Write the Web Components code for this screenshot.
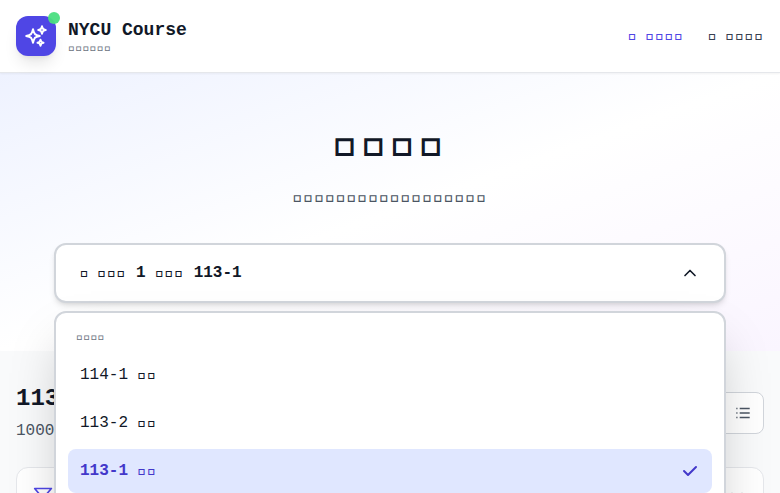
<!DOCTYPE html>
<html lang="zh-Hant"><head><meta charset="utf-8"><title>NYCU Course</title>
<style>
html,body{margin:0;height:100%;overflow:hidden}
body{font-family:"Liberation Mono",monospace;font-size:16px;line-height:24px;color:#111827;background:#f9fafb}
</style></head><body>
<course-app></course-app>
<script>
const define=(name,html)=>customElements.define(name,class extends HTMLElement{
  constructor(){super();this.attachShadow({mode:'open'}).innerHTML=html.replaceAll('□','\uE123')}
});
define('lead-glyph',`<style>:host{letter-spacing:-1.6px}</style>□`);
define('brand-mark',`<style>
:host{display:flex;align-items:center;gap:12px}
.logo{position:relative;width:40px;height:40px;border-radius:12px;background:#4f46e5;display:grid;place-items:center;box-shadow:0 10px 15px -3px #0000001a,0 4px 6px -4px #0000001a}
.logo:after{content:"";position:absolute;right:-4px;top:-4px;width:12px;height:12px;border-radius:50%;background:#4ade80;opacity:.95}
b{display:block;font-size:18px;line-height:28px}small{display:block;font-size:12px;line-height:16px;color:#6b7280;margin-top:-4px}
</style><div class="logo"><svg width="24" height="24" viewBox="0 0 24 24" fill="none" stroke="#fff" stroke-width="2" stroke-linecap="round" stroke-linejoin="round"><path d="M9.813 15.904 9 18.75l-.813-2.846a4.5 4.5 0 0 0-3.09-3.09L2.25 12l2.846-.813a4.5 4.5 0 0 0 3.09-3.09L9 5.25l.813 2.846a4.5 4.5 0 0 0 3.09 3.09L15.75 12l-2.846.813a4.5 4.5 0 0 0-3.09 3.09ZM18.259 8.715 18 9.75l-.259-1.035a3.375 3.375 0 0 0-2.455-2.456L14.25 6l1.036-.259a3.375 3.375 0 0 0 2.455-2.456L18 2.25l.259 1.035a3.375 3.375 0 0 0 2.456 2.456L21.75 6l-1.035.259a3.375 3.375 0 0 0-2.456 2.456ZM16.894 20.567 16.5 21.75l-.394-1.183a2.25 2.25 0 0 0-1.423-1.423L13.5 18.75l1.183-.394a2.25 2.25 0 0 0 1.423-1.423l.394-1.183.394 1.183a2.25 2.25 0 0 0 1.423 1.423l1.183.394-1.183.394a2.25 2.25 0 0 0-1.423 1.423Z"/></svg></div><div><b>NYCU Course</b><small>□□□□□□</small></div>`);
define('site-header',`<style>
:host{display:flex;justify-content:space-between;align-items:center;height:72px;padding:0 16px;background:#fff;border-bottom:1px solid #e5e7eb;box-shadow:0 1px 2px #0000000d;position:relative;z-index:1}
nav{display:flex;gap:24px;color:#374151}.on{color:#4f46e5}
</style><brand-mark></brand-mark><nav><span class="on"><lead-glyph></lead-glyph> □□□□</span><span><lead-glyph></lead-glyph> □□□□</span></nav>`);
customElements.define('semester-option',class extends HTMLElement{
  constructor(){super();this.attachShadow({mode:'open'}).innerHTML=`<style>
:host{display:flex;align-items:center;justify-content:space-between;height:44px;padding:0 12px;border-radius:8px}
:host([selected]){background:#e0e7ff;color:#4338ca;font-weight:700}
svg{display:none}:host([selected]) svg{display:block}
</style><span><slot></slot></span><svg width="20" height="20" viewBox="0 0 20 20" fill="currentColor"><path fill-rule="evenodd" d="M16.707 5.293a1 1 0 010 1.414l-8 8a1 1 0 01-1.414 0l-4-4a1 1 0 011.414-1.414L8 12.586l7.293-7.293a1 1 0 011.414 0z"/></svg>`}
});
define('semester-picker',`<style>
:host{display:block;position:relative;width:672px;max-width:100%}
.field{box-sizing:border-box;height:60px;display:flex;align-items:center;justify-content:space-between;padding:0 24px;border:2px solid #d1d5db;border-radius:12px;background:#fff;font-weight:700;box-shadow:0 4px 6px -1px #0000001a,0 2px 4px -2px #0000001a}
.menu{box-sizing:border-box;position:absolute;top:68px;left:0;right:0;height:320px;padding:12px;border:2px solid #d1d5db;border-radius:12px;background:#fff;box-shadow:0 25px 50px -12px #00000040;display:flex;flex-direction:column;gap:4px}
.label{font-size:12px;line-height:16px;color:#6b7280;padding:4px 8px}
</style><div class="field"><span><lead-glyph></lead-glyph> □□□ 1 □□□ 113-1</span><svg width="20" height="20" viewBox="0 0 24 24" fill="none" stroke="currentColor" stroke-width="2" stroke-linecap="round" stroke-linejoin="round"><path d="m18 15-6-6-6 6"/></svg></div>
<div class="menu"><div class="label">□□□□</div><semester-option>114-1 □□</semester-option><semester-option>113-2 □□</semester-option><semester-option selected>113-1 □□</semester-option></div>`);
define('hero-panel',`<style>
:host{display:flex;flex-direction:column;align-items:center;box-sizing:border-box;height:278px;padding-top:46px;background:linear-gradient(to bottom right,#eef2ff,#fff,#faf5ff);position:relative}
h1{font-size:48px;line-height:48px;margin:0 0 16px}p{font-size:18px;line-height:28px;margin:0 0 32px;color:#4b5563}semester-picker{z-index:2}
</style><h1>□□□□</h1><p>□□□□□□□□□□□□□□□□□□</p><semester-picker></semester-picker>`);
define('course-results',`<style>
:host{display:block;box-sizing:border-box;height:142px;overflow:hidden;padding:32px 16px 0}
.head{display:flex;justify-content:space-between;align-items:center}
h2{font-size:24px;line-height:32px;margin:0}p{margin:4px 0 0;color:#4b5563}
.toggle{box-sizing:border-box;width:84px;height:42px;border:1px solid #d1d5db;border-radius:8px;background:#fff;display:flex;align-items:center;justify-content:flex-end;padding-right:12px;color:#4b5563}
.card{box-sizing:border-box;height:58px;margin-top:24px;border:1px solid #e5e7eb;border-radius:12px;background:#fff;padding:16px;display:flex;align-items:center;justify-content:space-between}
</style><div class="head"><div><h2>113-1 □□</h2><p>1000 □□</p></div><div class="toggle"><svg width="16" height="16" viewBox="0 0 16 16" fill="none" stroke="currentColor" stroke-width="1.300"><path d="M4.700 3.500H14.700M4.700 8H14.700M4.700 12.500H14.700"/><path opacity=".7" d="M1 3.500h1.700M1 8h1.700M1 12.500h1.700"/></svg></div></div>
<div class="card"><svg width="20" height="20" viewBox="0 0 24 24" fill="none" stroke="#4f46e5" stroke-width="2" stroke-linejoin="round"><path d="M22 3H2l8 9.460V19l4 2v-8.540L22 3z"/></svg><svg width="20" height="20" viewBox="0 0 24 24" fill="none" stroke="#9ca3af" stroke-width="2" stroke-linecap="round" stroke-linejoin="round"><path d="m6 9 6 6 6-6"/></svg></div>`);
define('course-app',`<style>:host{display:block;height:493px;overflow:hidden}</style><site-header></site-header><hero-panel></hero-panel><course-results></course-results>`);
</script></body></html>
